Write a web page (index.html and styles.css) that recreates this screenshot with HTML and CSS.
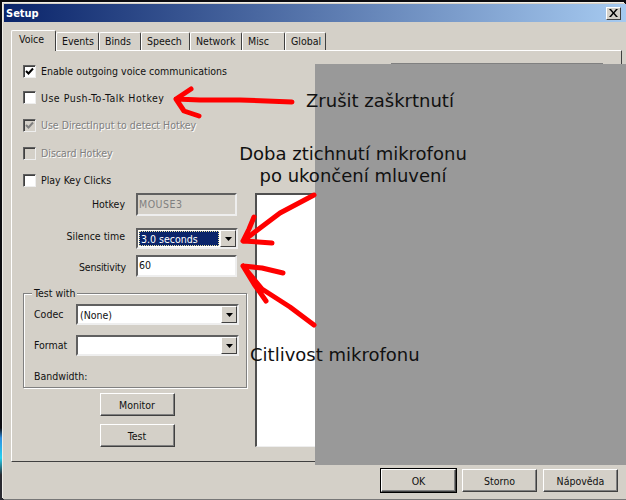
FILE: index.html
```html
<!DOCTYPE html>
<html lang="cs">
<head>
<meta charset="utf-8">
<title>Setup</title>
<link rel="stylesheet" href="styles.css">
</head>
<body>
<div class="window">
  <div class="titlebar">
    <span class="title">Setup</span>
    <span class="close"><svg width="9" height="8" viewBox="0 0 9 8"><path d="M0 0h2l2.500 3 2.500-3h2L5.500 4 9 8H7L4.500 5 2 8H0l3.500-4z" fill="#000"/></svg></span>
  </div>
  <div class="dialog">
    <div class="tabs">
      <span class="tab active">Voice</span>
      <span class="tab w-events">Events</span>
      <span class="tab w-binds">Binds</span>
      <span class="tab w-speech">Speech</span>
      <span class="tab w-network">Network</span>
      <span class="tab w-misc">Misc</span>
      <span class="tab w-global">Global</span>
    </div>
    <div class="panel">
      <div class="left">
        <label class="check r26"><span class="box on"><svg width="9" height="9" viewBox="0 0 9 9"><path d="M1 4l2.500 2.500L8 1.500" fill="none" stroke="#000" stroke-width="2"/></svg></span>Enable outgoing voice communications</label>
        <label class="check r27 spaced"><span class="box"></span>Use Push-To-Talk Hotkey</label>
        <label class="check r28 off"><span class="box dis"><svg width="9" height="9" viewBox="0 0 9 9"><path d="M1 4l2.500 2.500L8 1.500" fill="none" stroke="#808080" stroke-width="2"/></svg></span>Use DirectInput to detect Hotkey</label>
        <label class="check r28 off"><span class="box dis"></span>Discard Hotkey</label>
        <label class="check r26"><span class="box"></span>Play Key Clicks</label>
        <div class="field f-hotkey"><span class="lab up1">Hotkey</span><span class="input dis-input">MOUSE3</span></div>
        <div class="field f-silence"><span class="lab up3">Silence time</span>
          <span class="combo c-silence"><span class="value sel">3.0 seconds</span><span class="drop"><svg width="7" height="4" viewBox="0 0 7 4"><path d="M0 0h7L3.500 4z" fill="#000"/></svg></span></span>
        </div>
        <div class="field f-sens"><span class="lab sens">Sensitivity</span><span class="input">60</span></div>
        <div class="group">
          <span class="legend">Test with</span>
          <div class="grow g-codec"><span class="glab up1">Codec</span>
            <span class="combo c-test"><span class="value">(None)</span><span class="drop"><svg width="7" height="4" viewBox="0 0 7 4"><path d="M0 0h7L3.500 4z" fill="#000"/></svg></span></span>
          </div>
          <div class="grow g-format"><span class="glab up1">Format</span>
            <span class="combo c-test"><span class="value"></span><span class="drop"><svg width="7" height="4" viewBox="0 0 7 4"><path d="M0 0h7L3.500 4z" fill="#000"/></svg></span></span>
          </div>
          <div class="band">Bandwidth:</div>
        </div>
        <div class="actions">
          <button class="btn wide">Monitor</button>
          <button class="btn wide">Test</button>
        </div>
      </div>
      <div class="right">
        <div class="rgroup"></div>
        <div class="list"></div>
      </div>
    </div>
    <div class="footer">
      <button class="btn wide default">OK</button>
      <button class="btn wide">Storno</button>
      <button class="btn wide">Nápověda</button>
    </div>
  </div>
</div>

<div class="cover"></div>
<svg class="arrows" width="626" height="500" viewBox="0 0 626 500">
  <g fill="none" stroke="#f00" stroke-width="5" stroke-linecap="round" stroke-linejoin="round">
    <path d="M292 102L240 100 200 100 176 99M191 89L176 99 184 111 199 116"/>
    <path d="M314 195L280 213 243 241M254 217L249 229 243 241 258 242 272 243"/>
    <path d="M243 266L262 268 283 273M243 266L254 284 266 301M243 266L262 289 290 307 314 325"/>
  </g>
</svg>
<div class="note n1">Zrušit zaškrtnutí</div>
<div class="note n2">Doba ztichnutí mikrofonu<br>po ukončení mluvení</div>
<div class="note n3">Citlivost mikrofonu</div>
</body>
</html>
```
FILE: styles.css
```css
html, body { margin: 0; padding: 0; }
body {
  width: 626px;
  height: 500px;
  overflow: hidden;
  position: relative;
  background: linear-gradient(#0c0c10 0, #0c0c10 428px, #2f8fe0 438px, #25d0f0 458px, #2a2a30 475px);
  font-family: "DejaVu Sans Condensed", "DejaVu Sans", sans-serif;
  font-stretch: condensed;
  font-size: 10.500px;
  color: #111;
}
.window {
  margin: 4px 0 0 4px;
  width: 622px;
  height: 495px;
  background: #d4d0c8;
  display: flex;
  flex-direction: column;
  border-bottom: 1px solid #777;
  box-shadow: -1px -1px 0 #d4d0c8, -2px -2px 0 #f0eee8;
}
.titlebar {
  height: 18px;
  flex: none;
  display: flex;
  align-items: center;
  justify-content: space-between;
  padding: 0 5px 0 2px;
  background: linear-gradient(90deg, #0a246a, #a6caf0);
}
.title { color: #fff; font-weight: 700; font-size: 11px; }
.close {
  width: 15px;
  height: 13px;
  box-sizing: border-box;
  display: flex;
  align-items: center;
  justify-content: center;
  background: #d4d0c8;
  border: 1px solid;
  border-color: #fff #404040 #404040 #fff;
}
.dialog { flex: 1; display: flex; flex-direction: column; padding: 8px 4px 0 7px; }
.tabs { display: flex; height: 20px; align-items: flex-end; position: relative; z-index: 1; }
.tab {
  box-sizing: border-box;
  height: 18px;
  border: 1px solid;
  border-color: #fff #404040 transparent #fff;
  border-bottom: 0;
  border-radius: 2px 2px 0 0;
  padding: 2px 0 0 5px;
  white-space: nowrap;
}
.tab.active {
  width: 45px;
  height: 21px;
  margin-bottom: -1px;
  background: #d4d0c8;
  padding: 2px 0 0 7px;
}
.w-events { width: 43px; }
.w-binds { width: 42px; }
.w-speech { width: 49px; }
.w-network { width: 52px; }
.w-misc { width: 43px; }
.w-global { width: 41px; }
.panel {
  box-sizing: border-box;
  height: 412px;
  flex: none;
  display: flex;
  border: 1px solid;
  border-color: #fff #404040 #404040 #fff;
  padding: 7px 0 0 11px;
}
.left { width: 224px; flex: none; }
.check { display: flex; align-items: center; white-space: nowrap; }
.r26 { height: 26px; }
.r27 { height: 27px; }
.r28 { height: 28px; }
.spaced { letter-spacing: .5px; }
.off { color: #808080; text-shadow: 1px 1px 0 #fff; }
.box {
  box-sizing: border-box;
  width: 13px;
  height: 13px;
  margin-right: 5px;
  flex: none;
  display: flex;
  align-items: center;
  justify-content: center;
  background: #fff;
  border: 1px solid;
  border-color: #606060 #eee #eee #606060;
  box-shadow: inset 1px 1px 0 #404040;
}
.box.dis { background: #d4d0c8; }
.field { display: flex; align-items: center; }
.f-hotkey { height: 23px; }
.f-silence { height: 21px; margin-top: 12px; }
.f-sens { height: 22px; margin-top: 6px; }
.lab { width: 103px; text-align: right; margin-right: 10px; flex: none; padding-right: 1px; box-sizing: border-box; }
.up1 { padding-bottom: 2px; }
.up3 { padding-bottom: 6px; }
.sens { padding-top: 2px; padding-right: 0; letter-spacing: -.2px; }
.input {
  box-sizing: border-box;
  width: 101px;
  height: 100%;
  background: #fff;
  border: 2px solid;
  border-color: #606060 #eee #eee #606060;
  padding: 0 0 2px 1px;
  display: flex;
  align-items: center;
}
.dis-input { background: #d4d0c8; color: #808080; letter-spacing: .5px; }
.combo {
  box-sizing: border-box;
  display: flex;
  align-items: stretch;
  height: 21px;
  background: #fff;
  border: 2px solid;
  border-color: #606060 #eee #eee #606060;
}
.c-silence { width: 102px; }
.c-test { width: 163px; flex: none; }
.value { flex: 1; display: flex; align-items: center; padding-left: 2px; }
.value.sel {
  background: #0a246a;
  color: #fff;
  margin: 1px;
  outline: 1px dotted #e8e0a0;
  outline-offset: -1px;
}
.drop {
  width: 16px;
  flex: none;
  box-sizing: border-box;
  display: flex;
  align-items: center;
  justify-content: center;
  background: #d4d0c8;
  border: 1px solid;
  border-color: #fff #404040 #404040 #fff;
}
.group {
  box-sizing: border-box;
  position: relative;
  width: 224px;
  height: 95px;
  margin-top: 16px;
  border: 1px solid #808080;
  box-shadow: 1px 1px 0 #fff, inset 1px 1px 0 #fff;
  padding: 10px 0 0 10px;
}
.legend { position: absolute; left: 8px; top: -7px; padding: 0 2px; background: #d4d0c8; }
.grow { display: flex; align-items: center; }
.g-format { margin-top: 10px; }
.glab { width: 42px; flex: none; box-sizing: border-box; }
.band { margin-top: 14px; }
.actions { display: flex; flex-direction: column; align-items: center; gap: 8px; margin-top: 5px; padding-left: 5px; }
.btn {
  box-sizing: border-box;
  height: 23px;
  padding: 0;
  background: #d4d0c8;
  border: 1px solid;
  border-color: #fff #404040 #404040 #fff;
  box-shadow: inset -1px -1px 0 #808080;
  font: inherit;
  color: #111;
}
.wide { width: 75px; }
.actions .wide { margin-right: 1px; }
.default { outline: 1px solid #000; }
.right { position: relative; flex: 1; margin-left: 8px; }
.rgroup {
  margin: 5px 0 0 136px;
  width: 212px;
  height: 6px;
  border-top: 1px solid #808080;
  box-shadow: inset 0 1px 0 #fff;
}
.list {
  box-sizing: border-box;
  margin-top: 123px;
  width: 200px;
  height: 254px;
  background: #fff;
  border: 1px solid;
  border-color: #505050 #eee #eee #505050;
  border-width: 2px 1px 1px 2px;
}
.footer { display: flex; justify-content: flex-end; gap: 6px; padding: 7px 4px 0 0; }
.cover { position: absolute; left: 315px; top: 64px; width: 311px; height: 401px; background: #999; }
.arrows { position: absolute; left: 0; top: 0; }
.note {
  position: absolute;
  font-family: "DejaVu Sans", sans-serif;
  font-stretch: normal;
  font-size: 18px;
  line-height: 22px;
  color: #111;
  white-space: nowrap;
}
.n1 { left: 306px; top: 90px; }
.n2 { left: 239px; top: 143px; width: 228px; text-align: center; }
.n3 { left: 250px; top: 344px; }
```
